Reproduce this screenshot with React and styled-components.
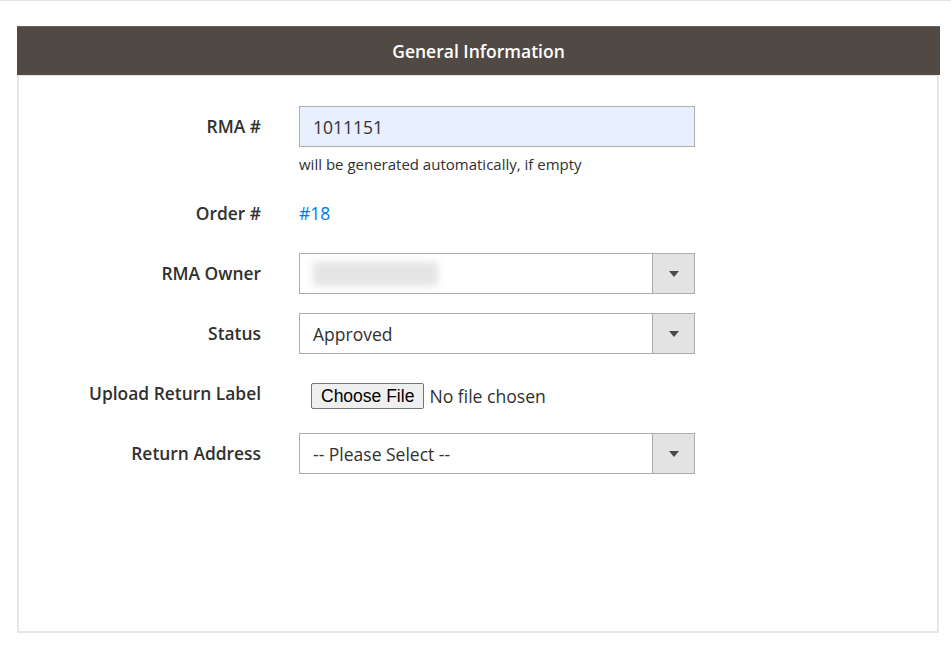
import React from "react";
import styled, { createGlobalStyle } from "styled-components";

const GlobalStyle = createGlobalStyle`
  html, body {
    margin: 0;
    padding: 0;
    background: #fff;
  }
  body {
    font-family: "Open Sans", "Liberation Sans", sans-serif;
    color: #303030;
  }
`;

// Page wrapper with the thin line on top
const Page = styled.div`
  border-top: 1px solid #e3e3e3;
  padding: 25px 11px 0 17px;
`;

const Fieldset = styled.section`
  display: flex;
  flex-direction: column;
`;

// Dark title bar
const Title = styled.h2`
  margin: 0;
  height: 48px;
  border-top: 1px solid #6a625c;
  background: #514943;
  color: #fff;
  font-size: 17.5px;
  font-weight: 600;
  display: flex;
  align-items: center;
  justify-content: center;
`;

const Body = styled.div`
  border: 2px solid #e6e6e6;
  border-top-width: 1px;
  margin-right: 1px;
  padding: 30px 0 157px;
  display: flex;
  flex-direction: column;
  gap: 19px;
`;

const Row = styled.div`
  display: grid;
  grid-template-columns: 242px 396px;
  column-gap: 38px;
  align-items: start;
`;

const Label = styled.label`
  text-align: right;
  font-size: 17.4px;
  font-weight: 600;
  line-height: 41px;
  color: #303030;
  white-space: nowrap;
`;

const Control = styled.div`
  display: flex;
  flex-direction: column;
`;

const TextInput = styled.input`
  box-sizing: border-box;
  height: 41px;
  width: 100%;
  margin: 0;
  border: 1px solid #adadad;
  background: #e8f0fe;
  padding: 0 13px;
  font-family: inherit;
  font-size: 17.5px;
  color: #303030;
  outline: none;
`;

const Note = styled.div`
  margin-top: 8px;
  font-size: 15px;
  line-height: 19px;
  color: #303030;
`;

const Link = styled.a`
  font-size: 17.5px;
  line-height: 41px;
  color: #007bdb;
  text-decoration: none;
`;

// Select with the grey arrow box on the right
const Select = styled.div`
  box-sizing: border-box;
  height: 41px;
  border: 1px solid #adadad;
  display: flex;
  align-items: stretch;
  background: #fff;
`;

const SelectValue = styled.div`
  flex: 1;
  display: flex;
  align-items: center;
  padding-left: 13px;
  font-size: 17.5px;
  color: #303030;
`;

const Blurred = styled.span`
  display: block;
  width: 125px;
  height: 24px;
  background: #e4e4e4;
  filter: blur(4px);
`;

const ArrowBox = styled.div`
  width: 41px;
  border-left: 1px solid #adadad;
  background: #e3e3e3;
  display: flex;
  align-items: center;
  justify-content: center;
`;

const Arrow = styled.span`
  width: 0;
  height: 0;
  border-left: 5px solid transparent;
  border-right: 5px solid transparent;
  border-top: 6px solid #514943;
`;

const FileField = styled.div`
  box-sizing: border-box;
  height: 41px;
  display: flex;
  align-items: center;
  padding: 5px 0 0 12px;
  gap: 5px;
`;

const FileButton = styled.button`
  box-sizing: border-box;
  height: 26px;
  padding: 0 9px;
  border: 1px solid #767676;
  border-radius: 2px;
  background: #efefef;
  font-family: "Liberation Sans", Arial, sans-serif;
  font-size: 17.5px;
  color: #000;
`;

const FileText = styled.span`
  font-size: 17.6px;
  color: #303030;
`;

const Dropdown = ({ children }) => (
  <Select>
    <SelectValue>{children}</SelectValue>
    <ArrowBox>
      <Arrow />
    </ArrowBox>
  </Select>
);

const App = () => {
  return (
    <>
      <GlobalStyle />
      <Page>
        <Fieldset>
          <Title>General Information</Title>
          <Body>
            <Row>
              <Label>RMA #</Label>
              <Control>
                <TextInput defaultValue="1011151" />
                <Note>will be generated automatically, if empty</Note>
              </Control>
            </Row>
            <Row>
              <Label>Order #</Label>
              <Control>
                <Link href="#">#18</Link>
              </Control>
            </Row>
            <Row>
              <Label>RMA Owner</Label>
              <Dropdown>
                <Blurred />
              </Dropdown>
            </Row>
            <Row>
              <Label>Status</Label>
              <Dropdown>Approved</Dropdown>
            </Row>
            <Row>
              <Label>Upload Return Label</Label>
              <FileField>
                <FileButton type="button">Choose File</FileButton>
                <FileText>No file chosen</FileText>
              </FileField>
            </Row>
            <Row>
              <Label>Return Address</Label>
              <Dropdown>-- Please Select --</Dropdown>
            </Row>
          </Body>
        </Fieldset>
      </Page>
    </>
  );
};

export default App;
